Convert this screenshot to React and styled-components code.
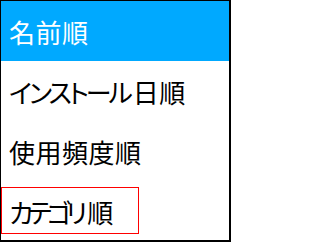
import React from "react";
import styled, { createGlobalStyle } from "styled-components";

const GlobalStyle = createGlobalStyle`
  html, body {
    margin: 0;
    padding: 0;
    background: #ffffff;
  }
`;

const List = styled.ul`
  width: 228px;
  height: 239px;
  margin: 0;
  padding: 0;
  list-style: none;
  overflow: hidden;
  background: #ffffff;
  border-style: solid;
  border-color: #000000;
  border-width: 1px 2px 2px 1px;
  font-family: "Noto Sans CJK JP", "Noto Sans", sans-serif;
`;

const Row = styled.li`
  position: relative;
  height: 60px;
  display: flex;
  align-items: center;
  padding-left: 8px;
  font-size: 26px;
  font-feature-settings: "palt";
  letter-spacing: 0.5px;
  white-space: nowrap;
  color: ${({ selected }) => (selected ? "#ffffff" : "#000000")};
  background: ${({ selected }) => (selected ? "#00a9ff" : "transparent")};

  ${({ focused }) =>
    focused &&
    `
    &::after {
      content: "";
      position: absolute;
      left: 0;
      top: 6px;
      width: 136px;
      height: 45px;
      border: 1px solid #ff0000;
    }
  `}
`;

// katakana in the original font are set narrower than kanji
const Kana = styled.span`
  letter-spacing: ${({ spacing }) => spacing}px;
  margin-right: ${({ spacing }) => -spacing}px;
`;

const items = [
  { kana: "", rest: "名前順", selected: true },
  { kana: "インストール", rest: "日順", spacing: -3 },
  { kana: "", rest: "使用頻度順" },
  { kana: "カテゴリ", rest: "順", spacing: -5, focused: true },
];

export default function App() {
  return (
    <>
      <GlobalStyle />
      <List>
        {items.map((item) => (
          <Row
            key={item.kana + item.rest}
            selected={item.selected}
            focused={item.focused}
          >
            {item.kana && <Kana spacing={item.spacing}>{item.kana}</Kana>}
            {item.rest}
          </Row>
        ))}
      </List>
    </>
  );
}
